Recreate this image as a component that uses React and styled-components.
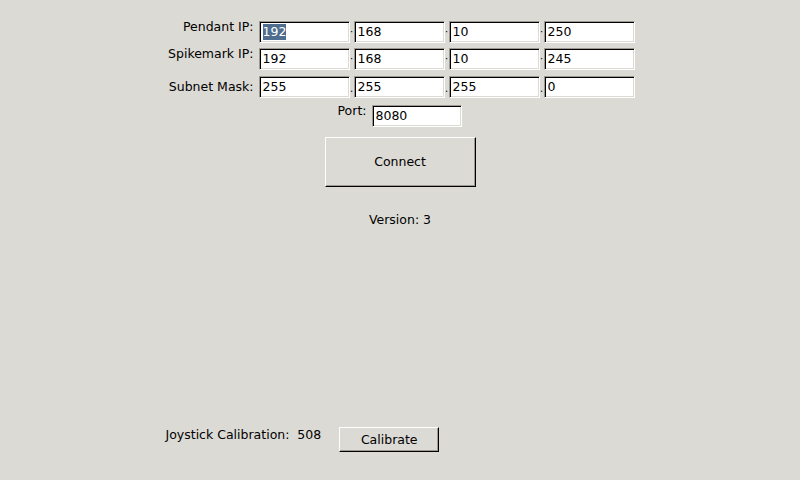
import React from "react";
import styled, { createGlobalStyle } from "styled-components";

const Global = createGlobalStyle`
  html, body { margin: 0; padding: 0; background: #dcdad5; }
  body { font-family: "DejaVu Sans", "Liberation Sans", sans-serif; }
`;

const Screen = styled.div`
  width: 800px;
  height: 480px;
  box-sizing: border-box;
  background: #dcdad5;
  color: #000;
  font-size: 12.5px;
  line-height: 14px;
  display: flex;
  flex-direction: column;
  align-items: center;
  padding: 21px 0 28px;
  overflow: hidden;
`;

const Form = styled.div`
  width: 469px;
  display: grid;
  grid-template-columns: 88px 376px;
  column-gap: 5px;
  row-gap: 5px;
`;

const Label = styled.div`
  text-align: right;
  white-space: nowrap;
  align-self: ${(p) => (p.$center ? "center" : "start")};
  margin-top: ${(p) => (p.$center ? "0" : "-1px")};
`;

const Octets = styled.div`
  display: flex;
  align-items: stretch;
  margin-top: ${(p) => p.$mt || 0}px;
`;

const Sep = styled.span`
  width: 4px;
  display: flex;
  justify-content: center;
  align-items: ${(p) => (p.$low ? "flex-end" : "center")};
  padding-bottom: ${(p) => (p.$low ? "4px" : "0")};
  font-size: 10px;
  line-height: 10px;
`;

const Field = styled.div`
  box-sizing: border-box;
  width: ${(p) => p.$w || 91}px;
  height: 22px;
  background: #fff;
  border-style: solid;
  border-width: 1px;
  border-color: #9e9a91 #fff #fff #9e9a91;
  box-shadow: inset 1px 1px 0 #000, inset -1px -1px 0 #dcdad5;
  padding: 3px 3px 0 3px;
  white-space: nowrap;
  overflow: hidden;
`;

const Selected = styled.span`
  background: #4f6d8e;
  color: #fff;
  display: inline-block;
  padding: 1px 0;
  margin-top: -1px;
`;

const PortRow = styled.div`
  display: flex;
  align-items: flex-start;
  gap: 5px;
  margin-top: 7px;
  margin-right: 1px;
`;

const RaisedButton = styled.div`
  box-sizing: border-box;
  width: ${(p) => p.$w}px;
  height: ${(p) => p.$h}px;
  background: #dcdad5;
  border-style: solid;
  border-width: 1px;
  border-color: #fff #000 #000 #fff;
  box-shadow: inset -1px -1px 0 #9e9a91;
  display: flex;
  align-items: center;
  justify-content: center;
  cursor: default;
`;

const ConnectButton = styled(RaisedButton)`
  margin-top: 10px;
`;

const Version = styled.div`
  margin-top: 26px;
`;

const Bottom = styled.div`
  margin-top: auto;
  width: 469px;
  display: flex;
  align-items: flex-start;
  gap: 18px;
`;

const CalText = styled.div`
  white-space: pre;
  margin-top: 1px;
`;

const rows = [
  { label: "Pendant IP:", values: ["192", "168", "10", "250"], sel: true },
  { label: "Spikemark IP:", values: ["192", "168", "10", "245"] },
  { label: "Subnet Mask:", values: ["255", "255", "255", "0"], center: true, low: true },
];

export default function App() {
  return (
    <>
      <Global />
      <Screen>
        <Form>
          {rows.map((r, ri) => (
            <React.Fragment key={r.label}>
              <Label $center={r.center}>{r.label}</Label>
              <Octets $mt={ri === 2 ? 1 : 0}>
                {r.values.map((v, i) => (
                  <React.Fragment key={i}>
                    {i > 0 && <Sep $low={r.low}>{r.low ? "." : "·"}</Sep>}
                    <Field>
                      {r.sel && i === 0 ? <Selected>{v}</Selected> : v}
                    </Field>
                  </React.Fragment>
                ))}
              </Octets>
            </React.Fragment>
          ))}
        </Form>
        <PortRow>
          <Label>Port:</Label>
          <Field $w={90}>8080</Field>
        </PortRow>
        <ConnectButton $w={151} $h={50}>Connect</ConnectButton>
        <Version>Version: 3</Version>
        <Bottom>
          <CalText>{"Joystick Calibration:  508"}</CalText>
          <RaisedButton $w={100} $h={25}>Calibrate</RaisedButton>
        </Bottom>
      </Screen>
    </>
  );
}
